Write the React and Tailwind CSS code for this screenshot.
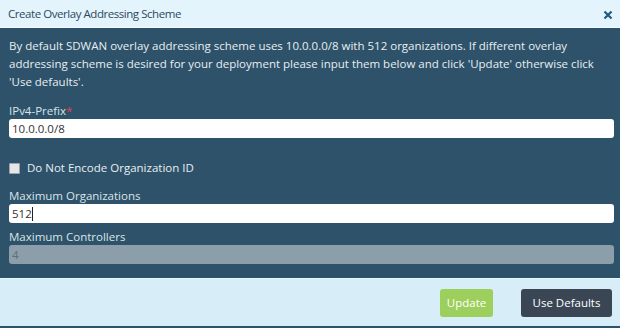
import React from "react";

const Field = ({ label, required, value, disabled, caret }) => (
  <div className="flex flex-col">
    <label className="text-[11.5px] leading-[16px] text-[#d9e4ea]">
      {label}
      {required && <span className="text-[#e0435a]">*</span>}
    </label>
    <div
      className={`h-[19px] rounded-[3px] px-[3px] flex items-center text-[11.5px] ${
        disabled ? "bg-[#8c9ea9] text-[#5a707e]" : "bg-white text-[#333]"
      }`}
    >
      {value}
      {caret && <span className="w-px h-[14px] bg-[#222]"></span>}
    </div>
  </div>
);

const App = () => {
  return (
    <div
      className="w-[620px] h-[328px] flex flex-col bg-[#2d5269]"
      style={{ fontFamily: '"Open Sans", sans-serif' }}
    >
      {/* Header */}
      <div className="h-[28px] bg-[#e4f4fc] border-b border-[#f4fbff] flex items-center justify-between pl-[8px] pr-[7px]">
        <span className="text-[11.5px] tracking-[-0.45px] text-[#2c4a5e] mt-[1px]">Create Overlay Addressing Scheme</span>
        <svg width="10" height="10" viewBox="0 0 10 10" className="mt-[3px]">
          <path d="M1.5 1.5 L8.5 8.5 M8.5 1.5 L1.5 8.5" stroke="#1f5a80" strokeWidth="2.2" />
        </svg>
      </div>

      {/* Body */}
      <div className="flex-1 px-[9px] pt-[9px] flex flex-col">
        <p className="text-[11.5px] leading-[18px] text-[#e8eef2]">
          By default SDWAN overlay addressing scheme uses 10.0.0.0/8 with 512 organizations. If different overlay
          addressing scheme is desired for your deployment please input them below and click 'Update' otherwise click
          'Use defaults'.
        </p>
        <div className="mt-[12px] mr-[-3px]">
          <Field label="IPv4-Prefix" required value="10.0.0.0/8" />
        </div>
        <div className="mt-[22px] h-[16px] flex items-center gap-[7px] text-[11.5px] text-[#e8eef2]">
          <span className="w-[11px] h-[11px] bg-[#e6e6e6] border border-[#9aa5ad] rounded-[1px]"></span>
          Do Not Encode Organization ID
        </div>
        <div className="mt-[12px] mr-[-3px]">
          <Field label="Maximum Organizations" value="512" caret />
        </div>
        <div className="mt-[6px] mr-[-3px]">
          <Field label="Maximum Controllers" value="4" disabled />
        </div>
      </div>

      {/* Footer */}
      <div className="h-[48px] bg-[#d7edf8] border-t border-[#e8f6fd] flex items-center justify-end gap-[28px] pr-[8px] mb-[2px]">
        <button className="h-[28px] w-[53px] rounded-[3px] bg-[#9ccf5b] text-white text-[11.5px]">Update</button>
        <button className="h-[28px] w-[91px] rounded-[3px] bg-[#3a4654] text-white text-[11.5px]">Use Defaults</button>
      </div>
    </div>
  );
};

export default App;
